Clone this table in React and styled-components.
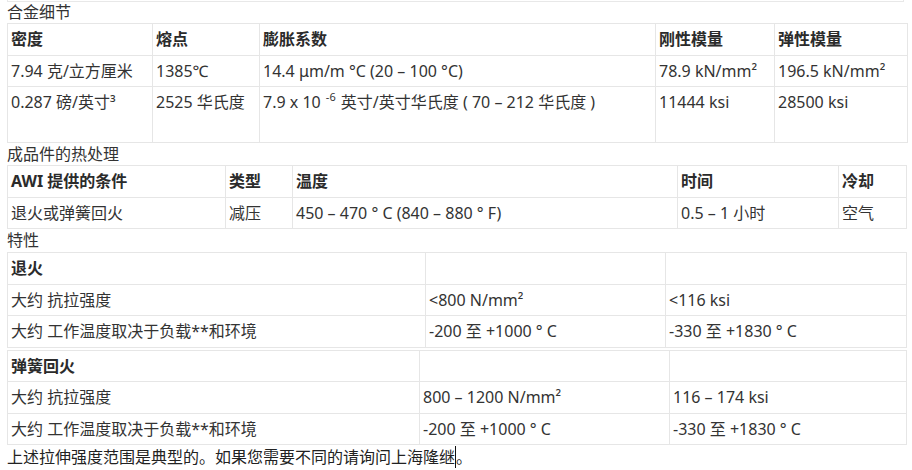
import React from "react";
import styled, { createGlobalStyle } from "styled-components";

const Global = createGlobalStyle`
  html, body { margin: 0; padding: 0; background: #fff; }
  body {
    font-family: "Noto Sans", "Noto Sans CJK SC", sans-serif;
    font-size: 16px;
    color: #333;
  }
`;

const Page = styled.div`
  padding: 0 0 0 7px;
  width: 900px;
`;

const PrevTableEdge = styled.div`
  width: 895px;
  height: 1px;
  border: 1px solid #e8e8e8;
  border-top: none;
`;

const Caption = styled.div`
  line-height: ${(p) => p.$h || 22}px;
  height: ${(p) => p.$h || 22}px;
  overflow: visible;
  white-space: nowrap;
`;

const Table = styled.table`
  border-collapse: collapse;
  table-layout: fixed;
  width: ${(p) => p.$w}px;
  margin-top: ${(p) => p.$mt || 0}px;
`;

const Row = styled.tr`
  height: ${(p) => (p.$h ? `${p.$h}px` : "auto")};
`;

const Cell = styled.td`
  border: 1px solid #e6e6e6;
  padding: 4px 3px;
  vertical-align: top;
  text-align: left;
  white-space: nowrap;
  overflow: hidden;
  font-weight: ${(p) => (p.$bold ? 700 : 400)};
  color: ${(p) => (p.$bold ? "#2b2b2b" : "#333")};
`;

const Line = styled.div`
  height: 22.5px;
  line-height: 22.5px;
  overflow: visible;
`;

const Sup = styled.sup`
  font-size: 11px;
  line-height: 0;
  vertical-align: 7px;
  margin: 0 1px;
`;

const Footer = styled.div`
  height: 24px;
  line-height: 24px;
  white-space: nowrap;
  color: #222;
`;

const Caret = styled.span`
  display: inline-block;
  width: 0;
  height: 22px;
  border-left: 1px solid #111;
  vertical-align: -5px;
`;

const Cols = ({ widths }) => (
  <colgroup>
    {widths.map((w, i) => (
      <col key={i} style={{ width: w }} />
    ))}
  </colgroup>
);

const C = ({ children, ...rest }) => (
  <Cell {...rest}>
    <Line>{children}</Line>
  </Cell>
);

export default function App() {
  return (
    <>
      <Global />
      <Page>
        <PrevTableEdge />
        <Caption $h={21}>合金细节</Caption>
        <Table $w={900}>
          <Cols widths={[145, 107, 396, 119, 133]} />
          <tbody>
            <Row>
              <C $bold>密度</C>
              <C $bold>熔点</C>
              <C $bold>膨胀系数</C>
              <C $bold>刚性模量</C>
              <C $bold>弹性模量</C>
            </Row>
            <Row>
              <C>7.94 克/立方厘米</C>
              <C>1385℃</C>
              <C>14.4 μm/m °C (20 – 100 °C)</C>
              <C>78.9 kN/mm²</C>
              <C>196.5 kN/mm²</C>
            </Row>
            <Row $h={56}>
              <C>0.287 磅/英寸³</C>
              <C>2525 华氏度</C>
              <C>
                7.9 x 10 <Sup>-6</Sup> 英寸/英寸华氏度 ( 70 – 212 华氏度 )
              </C>
              <C>11444 ksi</C>
              <C>28500 ksi</C>
            </Row>
          </tbody>
        </Table>
        <Caption $h={22}>成品件的热处理</Caption>
        <Table $w={899}>
          <Cols widths={[218, 67, 385, 161, 68]} />
          <tbody>
            <Row>
              <C $bold>AWI 提供的条件</C>
              <C $bold>类型</C>
              <C $bold>温度</C>
              <C $bold>时间</C>
              <C $bold>冷却</C>
            </Row>
            <Row>
              <C>退火或弹簧回火</C>
              <C>减压</C>
              <C>450 – 470 ° C (840 – 880 ° F)</C>
              <C>0.5 – 1 小时</C>
              <C>空气</C>
            </Row>
          </tbody>
        </Table>
        <Caption $h={23}>特性</Caption>
        <Table $w={899}>
          <Cols widths={[418, 240, 241]} />
          <tbody>
            <Row>
              <C $bold>退火</C>
              <C></C>
              <C></C>
            </Row>
            <Row>
              <C>大约 抗拉强度</C>
              <C>&lt;800 N/mm²</C>
              <C>&lt;116 ksi</C>
            </Row>
            <Row>
              <C>大约 工作温度取决于负载**和环境</C>
              <C>-200 至 +1000 ° C</C>
              <C>-330 至 +1830 ° C</C>
            </Row>
          </tbody>
        </Table>
        <Table $w={899} $mt={2}>
          <Cols widths={[412, 250, 237]} />
          <tbody>
            <Row>
              <C $bold>弹簧回火</C>
              <C></C>
              <C></C>
            </Row>
            <Row>
              <C>大约 抗拉强度</C>
              <C>800 – 1200 N/mm²</C>
              <C>116 – 174 ksi</C>
            </Row>
            <Row>
              <C>大约 工作温度取决于负载**和环境</C>
              <C>-200 至 +1000 ° C</C>
              <C>-330 至 +1830 ° C</C>
            </Row>
          </tbody>
        </Table>
        <Footer>
          上述拉伸强度范围是典型的。如果您需要不同的请询问上海隆继
          <Caret />。
        </Footer>
      </Page>
    </>
  );
}
